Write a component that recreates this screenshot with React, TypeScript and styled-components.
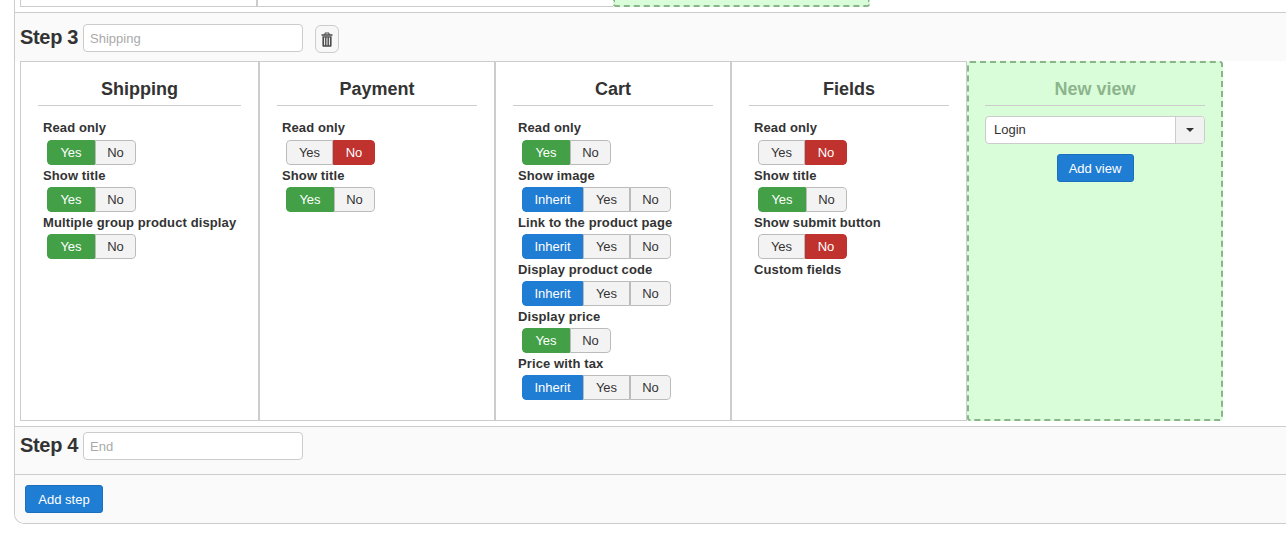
import React from "react";
import styled, { createGlobalStyle } from "styled-components";

const Global = createGlobalStyle`
  html, body { margin: 0; padding: 0; background: #fff; overflow: hidden; }
  body { font-family: "Liberation Sans", Arial, sans-serif; color: #333; }
`;

const Page = styled.div`
  width: 1286px;
  height: 535px;
  overflow: hidden;
  padding-left: 14px;
  box-sizing: border-box;
`;

const Frame = styled.div`
  width: 1320px;
  box-sizing: border-box;
  border-left: 1px solid #ccc;
  border-bottom: 1px solid #ccc;
  border-bottom-left-radius: 10px;
  overflow: hidden;
`;

const Tail = styled.div`
  display: flex;
  height: 7px;
  margin: 0 0 5px 5px;
`;

const TailCell = styled.div<{ $width: number; $open?: boolean }>`
  width: ${(p) => p.$width}px;
  box-sizing: border-box;
  border: 1px solid #ccc;
  border-top: none;
  border-right-width: ${(p) => (p.$open ? 0 : 1)}px;
`;

const TailNew = styled.div`
  width: 257px;
  height: 7px;
  box-sizing: border-box;
  background: #d9fdd9;
  border: 2px dashed #8ab48a;
  border-top: none;
  border-radius: 0 0 3px 3px;
`;

const StepHeader = styled.div<{ $top: number; $bottom: number }>`
  display: flex;
  align-items: flex-start;
  border-top: 1px solid #ccc;
  background: #fafafa;
  padding: ${(p) => p.$top}px 0 ${(p) => p.$bottom}px 5px;
`;

const StepTitle = styled.h3`
  margin: 0 5px 0 0;
  font-size: 20px;
  font-weight: 700;
  letter-spacing: -0.33px;
  line-height: 26px;
  color: #333;
`;

const NameInput = styled.input`
  width: 220px;
  height: 28px;
  box-sizing: border-box;
  border: 1px solid #ccc;
  border-radius: 4px;
  padding: 0 6px;
  background: #fff;
  font: 13px "Liberation Sans", Arial, sans-serif;
  outline: none;
  &::placeholder { color: #aaa; opacity: 1; }
`;

const IconButton = styled.button`
  display: flex;
  align-items: center;
  justify-content: center;
  width: 24px;
  height: 28px;
  margin: 1px 0 0 12px;
  padding: 0;
  box-sizing: border-box;
  border: 1px solid #ccc;
  border-radius: 6px;
  background: #f7f7f7;
`;

const ViewRow = styled.div`
  display: flex;
  align-items: stretch;
  height: 360px;
  margin: 0 0 5px 5px;
`;

const Cell = styled.div<{ $width: number }>`
  width: ${(p) => p.$width}px;
  box-sizing: border-box;
  background: #fff;
  border: 1px solid #ccc;
  padding: 17px 17px 0;
`;

const NewCell = styled.div`
  width: 256px;
  box-sizing: border-box;
  background: #d9fdd9;
  border: 2px dashed #8ab48a;
  border-radius: 3px;
  padding: 16px 16px 0;
  display: flex;
  flex-direction: column;
  align-items: center;
`;

const CellTitle = styled.h4<{ $muted?: boolean }>`
  align-self: stretch;
  margin: 0;
  padding-bottom: 6px;
  border-bottom: 1px solid #ccc;
  text-align: center;
  font-size: 18px;
  line-height: 20px;
  font-weight: 700;
  color: ${(p) => (p.$muted ? "#8db58d" : "#333")};
`;

const Options = styled.div`
  padding: 12px 0 0 5px;
`;

const OptionLabel = styled.div`
  height: 22px;
  font-size: 13px;
  line-height: 22px;
  font-weight: 700;
  letter-spacing: 0.11px;
  color: #333;
  white-space: nowrap;
  &:first-child { line-height: 20px; }
`;

const Toggle = styled.div`
  display: flex;
  width: max-content;
  height: 25px;
  margin-left: 4px;
  box-sizing: border-box;
  border-radius: 4px;
  overflow: hidden;
`;

const palette: Record<string, string> = {
  green: "#43a047",
  red: "#c0322e",
  blue: "#1f7dd3",
};

const ToggleOption = styled.div<{ $width: number; $tone?: string }>`
  width: ${(p) => p.$width}px;
  box-sizing: border-box;
  display: flex;
  align-items: center;
  justify-content: center;
  font-size: 13px;
  color: ${(p) => (p.$tone ? "#fff" : "#333")};
  background: ${(p) => (p.$tone ? palette[p.$tone] : "#f3f3f3")};
  border: 1px solid ${(p) => (p.$tone ? palette[p.$tone] : "#bbb")};
  & + & { border-left-width: ${(p) => (p.$tone ? 1 : 0)}px; }
  &:first-child { border-radius: 4px 0 0 4px; }
  &:last-child { border-radius: 0 4px 4px 0; }
`;

const Select = styled.div`
  display: flex;
  align-self: stretch;
  height: 28px;
  margin-top: 10px;
  box-sizing: border-box;
  border: 1px solid #ccc;
  border-radius: 4px;
  background: #fff;
  overflow: hidden;
`;

const SelectValue = styled.div`
  flex: 1;
  padding-left: 8px;
  font-size: 13px;
  line-height: 26px;
  color: #333;
`;

const SelectCaret = styled.div`
  width: 28px;
  display: flex;
  align-items: center;
  justify-content: center;
  background: #f2f2f2;
  border-left: 1px solid #ccc;
  &::after {
    content: "";
    border-left: 4px solid transparent;
    border-right: 4px solid transparent;
    border-top: 4px solid #333;
  }
`;

const PrimaryButton = styled.button<{ $top?: number; $width: number }>`
  width: ${(p) => p.$width}px;
  height: 28px;
  margin-top: ${(p) => p.$top ?? 0}px;
  padding: 0;
  box-sizing: border-box;
  border: 1px solid #1b6fbd;
  border-radius: 3px;
  background: #1f7dd3;
  color: #fff;
  font: 13px "Liberation Sans", Arial, sans-serif;
`;

const Footer = styled.div`
  border-top: 1px solid #ccc;
  background: #fafafa;
  padding: 10px 0 10px 10px;
  display: flex;
`;

const TrashIcon = () => (
  <svg width="12" height="15" viewBox="0 0 12 15" fill="#4a4a4a" aria-hidden="true">
    <path d="M4 0.5h4l.8 1.7H11.5v1.5H.5V2.2h2.7zM4.7 1.4l-.3.8h3.2l-.3-.8z" />
    <path
      fillRule="evenodd"
      d="M1.4 4.3h9.2v9.2c0 .8-.5 1.3-1.2 1.3H2.6c-.7 0-1.2-.5-1.2-1.3zM3.1 5.6v7.6h1V5.6zM5.5 5.6v7.6h1V5.6zM7.9 5.6v7.6h1V5.6z"
    />
  </svg>
);

type Choice = { label: string; options: string[]; active: number };

const opt = (label: string, active?: "Yes" | "No" | "Inherit"): Choice => {
  if (!active) return { label, options: [], active: -1 };
  const options = active === "Inherit" ? ["Inherit", "Yes", "No"] : ["Yes", "No"];
  return { label, options, active: options.indexOf(active) };
};

const toneFor = (name: string) =>
  name === "Yes" ? "green" : name === "No" ? "red" : "blue";

const widthFor = (name: string, choice: Choice) => {
  if (name === "Inherit") return 61;
  if (choice.options.length === 3) return name === "Yes" ? 47 : 41;
  if (choice.active === 0) return name === "Yes" ? 48 : 41;
  return name === "Yes" ? 47 : 42;
};

const views: { title: string; width: number; choices: Choice[] }[] = [
  {
    title: "Shipping",
    width: 239,
    choices: [
      opt("Read only", "Yes"),
      opt("Show title", "Yes"),
      opt("Multiple group product display", "Yes"),
    ],
  },
  {
    title: "Payment",
    width: 236,
    choices: [opt("Read only", "No"), opt("Show title", "Yes")],
  },
  {
    title: "Cart",
    width: 236,
    choices: [
      opt("Read only", "Yes"),
      opt("Show image", "Inherit"),
      opt("Link to the product page", "Inherit"),
      opt("Display product code", "Inherit"),
      opt("Display price", "Yes"),
      opt("Price with tax", "Inherit"),
    ],
  },
  {
    title: "Fields",
    width: 236,
    choices: [
      opt("Read only", "No"),
      opt("Show title", "Yes"),
      opt("Show submit button", "No"),
      opt("Custom fields"),
    ],
  },
];

export default function App() {
  return (
    <Page>
      <Global />
      <Frame>
        <Tail>
          <TailCell $width={237} />
          <TailCell $width={356} $open />
          <TailNew />
        </Tail>

        <StepHeader $top={11} $bottom={8}>
          <StepTitle>Step 3</StepTitle>
          <NameInput placeholder="Shipping" />
          <IconButton aria-label="Delete step">
            <TrashIcon />
          </IconButton>
        </StepHeader>

        <ViewRow>
          {views.map((view) => (
            <Cell key={view.title} $width={view.width}>
              <CellTitle>{view.title}</CellTitle>
              <Options>
                {view.choices.map((choice) => (
                  <React.Fragment key={choice.label}>
                    <OptionLabel>{choice.label}</OptionLabel>
                    {choice.options.length > 0 && (
                      <Toggle>
                        {choice.options.map((name, i) => (
                          <ToggleOption
                            key={name}
                            $width={widthFor(name, choice)}
                            $tone={i === choice.active ? toneFor(name) : undefined}
                          >
                            {name}
                          </ToggleOption>
                        ))}
                      </Toggle>
                    )}
                  </React.Fragment>
                ))}
              </Options>
            </Cell>
          ))}
          <NewCell>
            <CellTitle $muted>New view</CellTitle>
            <Select>
              <SelectValue>Login</SelectValue>
              <SelectCaret />
            </Select>
            <PrimaryButton $top={10} $width={77}>Add view</PrimaryButton>
          </NewCell>
        </ViewRow>

        <StepHeader $top={5} $bottom={14}>
          <StepTitle>Step 4</StepTitle>
          <NameInput placeholder="End" />
        </StepHeader>

        <Footer>
          <PrimaryButton $width={78}>Add step</PrimaryButton>
        </Footer>
      </Frame>
    </Page>
  );
}
